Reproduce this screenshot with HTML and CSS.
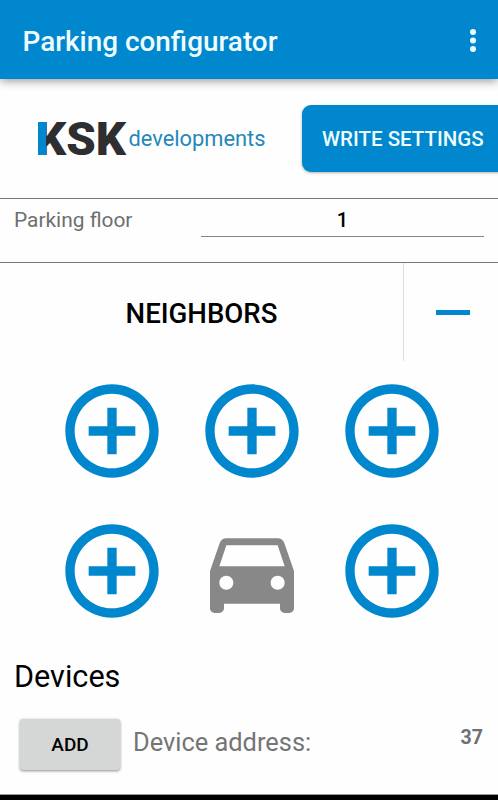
FILE: index.html
```html
<!DOCTYPE html>
<html lang="en">
	<head>
		<meta charset="utf-8">
		<title>Parking configurator</title>
		<link rel="stylesheet" href="styles.css">
	</head>
	<body>
		<svg class="defs" width="0" height="0">
			<symbol id="plus" viewBox="0 0 24 24">
				<path d="M13 7h-2v4H7v2h4v4h2v-4h4v-2h-4V7zm-1-5C6.48 2 2 6.48 2 12s4.48 10 10 10 10-4.48 10-10S17.52 2 12 2zm0 18c-4.41 0-8-3.59-8-8s3.59-8 8-8 8 3.59 8 8-3.59 8-8 8z"/>
			</symbol>
		</svg>

		<header class="toolbar">
			<h1>Parking configurator</h1>
			<svg class="menu" width="8" height="24" viewBox="0 0 8 24">
				<circle cx="4" cy="3" r="3"/>
				<circle cx="4" cy="11.5" r="3"/>
				<circle cx="4" cy="20" r="3"/>
			</svg>
		</header>

		<div class="brand">
			<svg class="logo" width="250" height="76" viewBox="0 0 250 76">
				<defs>
					<linearGradient id="stem" gradientUnits="userSpaceOnUse" x1="0" y1="0" x2="100" y2="0">
						<stop offset="0.178" stop-color="#0087cd"/>
						<stop offset="0.178" stop-color="#2e2e30"/>
					</linearGradient>
				</defs>
				<text class="ksk" x="8" y="56" textLength="90" lengthAdjust="spacingAndGlyphs" fill="url(#stem)">KSK</text>
				<rect x="10" y="23" width="8" height="33" fill="#0087cd"/>
				<text class="dev" x="100.5" y="47" textLength="137" lengthAdjust="spacingAndGlyphs">developments</text>
			</svg>
			<button class="write">WRITE SETTINGS</button>
		</div>

		<div class="floor">
			<label for="floor">Parking floor</label>
			<input type="text" id="floor" value="1">
		</div>

		<div class="neighborsHead">
			<h2>NEIGHBORS</h2>
			<div class="collapse"><span class="minus"></span></div>
		</div>
		<div class="neighbors">
			<svg class="plus"><use href="#plus"/></svg>
			<svg class="plus"><use href="#plus"/></svg>
			<svg class="plus"><use href="#plus"/></svg>
			<svg class="plus"><use href="#plus"/></svg>
			<svg class="car" viewBox="0 0 24 24">
				<path d="M18.92 6.01C18.72 5.42 18.16 5 17.5 5h-11c-.66 0-1.21.42-1.42 1.01L3 12v8c0 .55.45 1 1 1h1c.55 0 1-.45 1-1v-1h12v1c0 .55.45 1 1 1h1c.55 0 1-.45 1-1v-8l-2.08-5.99zM6.5 16c-.83 0-1.5-.67-1.5-1.5S5.67 13 6.5 13s1.5.67 1.5 1.5S7.33 16 6.5 16zm11 0c-.83 0-1.5-.67-1.5-1.5s.67-1.5 1.5-1.5 1.5.67 1.5 1.5-.67 1.5-1.5 1.5zM5 11l1.5-4.5h11L19 11H5z"/>
			</svg>
			<svg class="plus"><use href="#plus"/></svg>
		</div>

		<h3>Devices</h3>
		<div class="device">
			<button class="add">ADD</button>
			<span class="label">Device address:</span>
			<span class="value">37</span>
		</div>
		<div class="navbar"></div>
	</body>
</html>
```
FILE: styles.css
```css
* {
	box-sizing: border-box;
}
body {
	margin: 0;
	height: 800px;
	display: flex;
	flex-direction: column;
	overflow: hidden;
	background: #fefefe;
	color: #000;
	font-family: Roboto, "Liberation Sans", sans-serif;
}
h1, h2, h3 {
	margin: 0;
	font-weight: 500;
}
button {
	border: none;
	font-family: inherit;
	font-weight: 500;
	white-space: nowrap;
}
.defs {
	display: none;
}
.toolbar {
	flex: none;
	height: 79px;
	padding: 3px 21px 0 22.5px;
	display: flex;
	align-items: center;
	justify-content: space-between;
	background: #0087cd;
	color: #effcff;
	box-shadow: 0 2px 9px rgba(0, 0, 0, .4);
}
.toolbar h1 {
	font-size: 27.9px;
}
.menu {
	fill: #effcff;
}
.brand {
	flex: none;
	height: 119px;
	padding: 26px 0 0 28px;
	display: flex;
}
.logo {
	flex: none;
	margin: -6px 24px 0 0;
	overflow: visible;
}
.ksk {
	font-size: 46.5px;
	font-weight: 900;
}
.dev {
	font-size: 22.5px;
	fill: #2488ba;
}
.write {
	flex: none;
	width: 210px;
	height: 67px;
	padding: 1px 0 0 20px;
	text-align: left;
	border-radius: 9px;
	background: #0087cd;
	color: #effcff;
	font-size: 20.5px;
	box-shadow: 0 1px 3px rgba(0, 0, 0, .3);
}
.floor {
	flex: none;
	height: 65px;
	padding: 0 14px;
	display: flex;
	border-top: 1px solid #777;
	border-bottom: 1px solid #777;
}
.floor label {
	width: 187px;
	padding-top: 9px;
	font-size: 20.9px;
	color: #6f6f6f;
}
.floor input {
	flex: 1;
	min-width: 0;
	height: 38px;
	padding: 5px 0 0;
	border: none;
	border-bottom: 1px solid #858585;
	background: none;
	text-align: center;
	font: 500 20px Roboto, sans-serif;
}
.neighborsHead {
	flex: none;
	height: 98px;
	display: flex;
}
.neighborsHead h2 {
	width: 403px;
	padding-top: 2px;
	text-align: center;
	font-size: 27.6px;
	line-height: 98px;
}
.collapse {
	flex: 1;
	display: flex;
	align-items: center;
	justify-content: center;
	padding-left: 3px;
	border-left: 1px solid #ddd;
}
.minus {
	width: 34px;
	height: 5px;
	background: #0087cd;
}
.neighbors {
	flex: none;
	display: grid;
	grid-template-columns: repeat(3, 140px);
	grid-auto-rows: 140px;
	place-items: center;
	margin-left: 42px;
}
.neighbors svg {
	width: 112px;
	height: 112px;
}
.plus {
	fill: #0087cd;
}
.car {
	fill: #888;
}
h3 {
	flex: none;
	height: 78px;
	padding: 18px 14px 0;
	font-size: 30.6px;
	font-weight: 400;
}
.device {
	flex: none;
	height: 75px;
	padding: 0 15px 0 20px;
	display: flex;
}
.add {
	width: 100px;
	height: 51px;
	border-radius: 3px;
	background: #d5d7d6;
	font-size: 19px;
	box-shadow: 0 1px 3px rgba(0, 0, 0, .45);
}
.device .label {
	flex: 1;
	padding: 8px 0 0 13px;
	font-size: 25.4px;
	color: #757575;
}
.device .value {
	padding-top: 7px;
	font-size: 19.5px;
	font-weight: 700;
	color: #707070;
}
.navbar {
	flex: 1;
	background: #000;
	border-top: 1px solid #999;
}
```
